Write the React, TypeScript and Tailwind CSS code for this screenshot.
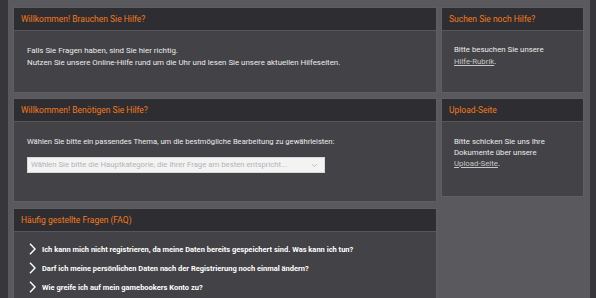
import { ChevronDown } from 'lucide-react';

// Panel mit dunklem Header
function Panel({ title, className = '', bodyClass = '', children }: { title: string; className?: string; bodyClass?: string; children: React.ReactNode }) {
  return (
    <div className={`flex flex-col border border-[#5f5e63] bg-[#434246] ${className}`}>
      <div className="flex h-[23px] shrink-0 items-center border-b border-[#57565b] bg-[#2e2d31] px-[7px] text-[8.5px] text-[#f27a1f]">
        {title}
      </div>
      <div className={`flex-1 ${bodyClass}`}>{children}</div>
    </div>
  );
}

const faqs = [
  'Ich kann mich nicht registrieren, da meine Daten bereits gespeichert sind. Was kann ich tun?',
  'Darf ich meine persönlichen Daten nach der Registrierung noch einmal ändern?',
  'Wie greife ich auf mein gamebookers Konto zu?',
];

export default function App() {
  return (
    <div
      className="flex h-[298px] w-[596px] overflow-hidden bg-[#37363a] pl-[8px] pr-[6px] text-[#ececec]"
      style={{ fontFamily: 'Roboto, "Liberation Sans", sans-serif' }}
    >
      <div className="flex flex-1 gap-[4px] bg-[#5a595d] pl-[5px] pt-[7px]">
        {/* linke Spalte */}
        <div className="flex w-[424px] flex-col gap-[5px]">
          <Panel title="Willkommen! Brauchen Sie Hilfe?" className="h-[86px]" bodyClass="px-[13px] pt-[14px] text-[7.9px] leading-[11.5px]">
            <p>Falls Sie Fragen haben, sind Sie hier richtig.</p>
            <p>Nutzen Sie unsere Online-Hilfe rund um die Uhr und lesen Sie unsere aktuellen Hilfeseiten.</p>
          </Panel>

          <Panel title="Willkommen! Benötigen Sie Hilfe?" className="h-[104px]" bodyClass="px-[13px] pt-[14px]">
            <p className="text-[7.6px] leading-[11px]">
              Wählen Sie bitte ein passendes Thema, um die bestmögliche Bearbeitung zu gewährleisten:
            </p>
            <div className="mt-[10px] flex h-[16px] w-[298px] items-center justify-between border border-[#d8d8d8] bg-[#f3f3f3] pl-[3px] pr-[5px] text-[7.75px] text-[#b3b3b3]">
              <span>Wählen Sie bitte die Hauptkategorie, die Ihrer Frage am besten entspricht...</span>
              <ChevronDown size={9} strokeWidth={1.5} className="text-[#9a9a9a]" />
            </div>
          </Panel>

          <Panel title="Häufig gestellte Fragen (FAQ)" className="mt-[1px] flex-1 border-b-0" bodyClass="flex flex-col gap-[7px] pl-[15px] pt-[11px]">
            {faqs.map((q) => (
              <div key={q} className="flex items-center gap-[6px] text-[7.5px] font-bold leading-[11px] text-white">
                <svg width="7" height="12" viewBox="0 0 7 12" fill="none" stroke="white" strokeWidth="1.4">
                  <polyline points="1,0.8 6,6 1,11.2" />
                </svg>
                <span>{q}</span>
              </div>
            ))}
          </Panel>
        </div>

        {/* rechte Spalte */}
        <div className="flex w-[143px] flex-col gap-[5px]">
          <Panel title="Suchen Sie noch Hilfe?" className="h-[86px]" bodyClass="px-[12px] pt-[13px] text-[7.8px] leading-[12px]">
            <p>Bitte besuchen Sie unsere</p>
            <p>
              <span className="text-[#c6c6c6] underline">Hilfe-Rubrik</span>.
            </p>
          </Panel>
          <Panel title="Upload-Seite" className="h-[99px]" bodyClass="px-[12px] pt-[14px] text-[7.8px] leading-[11px]">
            <p>Bitte schicken Sie uns Ihre</p>
            <p>Dokumente über unsere</p>
            <p>
              <span className="text-[#c6c6c6] underline">Upload-Seite</span>.
            </p>
          </Panel>
        </div>
      </div>
    </div>
  );
}
